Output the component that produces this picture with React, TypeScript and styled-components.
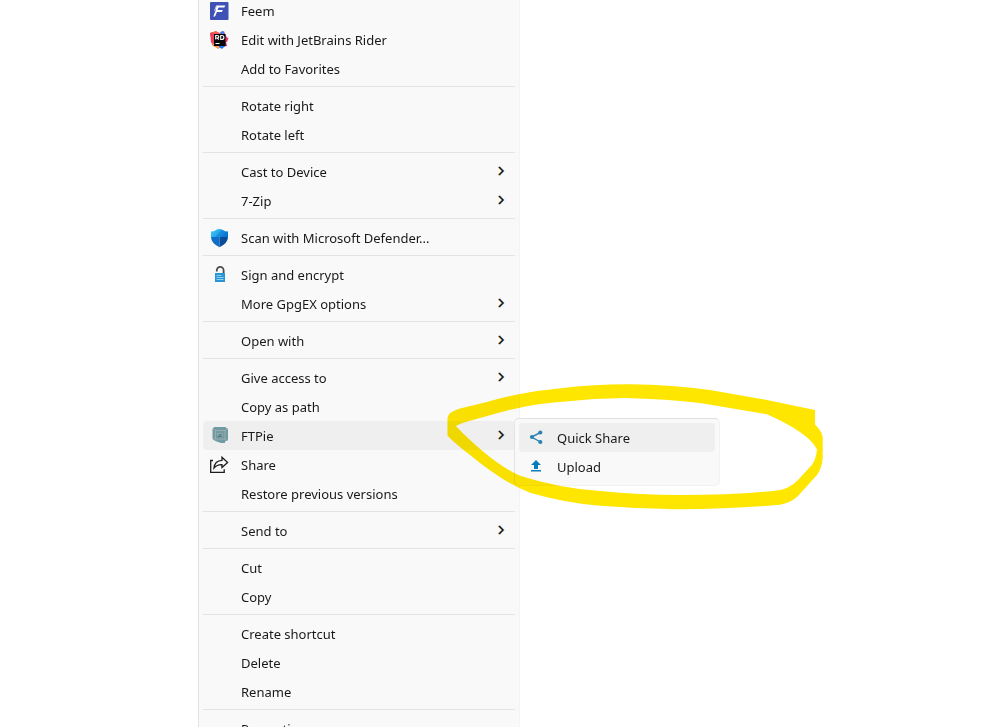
import React from "react";
import styled, { createGlobalStyle } from "styled-components";

const GlobalStyle = createGlobalStyle`
  *, *::before, *::after { box-sizing: border-box; }
  body {
    margin: 0;
    background: #fff;
    color: #191919;
    font-family: "Segoe UI", "Noto Sans", "Open Sans", sans-serif;
    font-size: 13px;
    line-height: 20px;
  }
`;

const Desktop = styled.main`
  height: 100vh;
  overflow: hidden;
  padding-left: 198px;
`;

const Menu = styled.nav`
  width: 322px;
  margin-top: -8px;
  padding: 3px 4px 4px;
  background: #f9f9f9;
  border: 1px solid #f4f4f4;
  border-left-color: #e4e4e4;
`;

const Group = styled.ul`
  list-style: none;
  margin: 0;
  padding: 0;

  & + & {
    margin-top: 3px;
    padding-top: 4px;
    border-top: 1px solid #e4e4e4;
  }
`;

const Entry = styled.li`
  position: relative;
`;

const Item = styled.button<{ $active?: boolean }>`
  display: grid;
  grid-template-columns: 34px 1fr 20px;
  align-items: center;
  width: 100%;
  height: 29px;
  margin: 0;
  padding: 0 4px;
  border: 0;
  border-radius: 4px;
  background: ${(p) => (p.$active ? "#efefef" : "transparent")};
  color: inherit;
  font: inherit;
  text-align: left;
  white-space: nowrap;
`;

const IconSlot = styled.span`
  display: flex;
  align-items: center;
  padding-left: 2px;

  svg {
    display: block;
  }
`;

const Arrow = styled.svg`
  display: block;
  justify-self: center;
`;

const Submenu = styled.ul`
  position: absolute;
  z-index: 1;
  left: calc(100% - 1px);
  top: -3px;
  width: 206px;
  margin: 0;
  padding: 4px;
  list-style: none;
  background: #f9f9f9;
  border: 1px solid #f2f2f2;
  border-top-color: #e0e0e0;
  border-left-color: #e4e4e4;
  border-radius: 5px;
`;

const Highlighter = styled.svg`
  position: absolute;
  z-index: 2;
  left: 244px;
  top: -37px;
  pointer-events: none;
  mix-blend-mode: multiply;
`;

const FeemIcon = () => (
  <svg width="20" height="20" viewBox="0 0 20 20" aria-hidden="true">
    <rect x="1" y="1" width="18.500" height="18" rx="1" fill="#3f51b5" />
    <path d="M7.500 4.500h8.800l-1 2H9.500L8.600 9h5.200l-1 2H8l-2 4.500H4.300l2.200-5.700z" fill="#fff" />
    <path d="M7.500 4.500L5.500 9.800" stroke="#c9cef0" strokeWidth="1" />
  </svg>
);

const RiderIcon = () => (
  <svg width="20" height="20" viewBox="0 0 20 20" aria-hidden="true">
    <path d="M1 3l6-2 4 3-2 14-5-2z" fill="#f4753c" />
    <path d="M1 3l3-1 2 6-2 8-2-4z" fill="#e9415f" />
    <path d="M6 1l5 2 4-2 2 5-4 2-8-3z" fill="#fb5b5b" />
    <path d="M13 2l4 4 2 3-2 3 1 4-5 1z" fill="#c92a86" />
    <path d="M11 2l3-1 3 5h-4z" fill="#3a7cf2" />
    <path d="M3 13l5 2 5 2-4 2-4-3z" fill="#ff9a4a" />
    <path d="M10 15l7 0-4 4-3-2z" fill="#176ff2" />
    <path d="M16 7l3.500 1-1.500 4h-2z" fill="#f0356a" />
    <rect x="5" y="4" width="11.500" height="12" fill="#050505" />
    <path d="M6.700 9.500v-4h1.400q1.700 0 1.700 1.300T8.100 8H6.700M8.200 8l1.600 1.500M11.700 5.500v4h1q2.200 0 2.200-2t-2.200-2zM6.500 13.500h4" fill="none" stroke="#fff" strokeWidth="1.100" />
  </svg>
);

const DefenderIcon = () => (
  <svg width="20" height="20" viewBox="0 0 20 20" aria-hidden="true">
    <defs>
      <linearGradient id="shieldTop" x1="0" y1="0" x2="1" y2="0.400">
        <stop offset="0" stopColor="#3fc8f5" />
        <stop offset="0.500" stopColor="#27aeea" />
        <stop offset="0.600" stopColor="#1a92e0" />
        <stop offset="1" stopColor="#0b76d0" />
      </linearGradient>
    </defs>
    <path d="M2 9V3.500q3 0 5-1.500 3-2 7 0 2 1.500 5 1.500V9z" fill="url(#shieldTop)" />
    <path d="M2 9h8.500v10.300Q2 15 2 9z" fill="#0c70c8" />
    <path d="M10.500 9H19q0 6-8.500 10.300z" fill="#0a4c98" />
  </svg>
);

const LockIcon = () => (
  <svg width="20" height="20" viewBox="0 0 20 20" aria-hidden="true">
    <path d="M7.800 6.500V5.200a3.400 3.400 0 0 1 6.800 0V9" fill="none" stroke="#4b4b4b" strokeWidth="1.800" />
    <rect x="6" y="8" width="10" height="9" fill="#2995d4" />
    <path d="M7.500 10.500h5M7.500 12.500h7M7.500 14.500h7" stroke="#8ed0f2" strokeWidth="1" />
  </svg>
);

const FtpieIcon = () => (
  <svg width="20" height="20" viewBox="0 0 20 20" aria-hidden="true">
    <path d="M5 1h11.500L19 3.500V14l-3 1.500v1.500h-4L9 16l-3.500-1.500L3.500 13V3z" fill="#6f9ca2" />
    <path d="M4 2.500l2.500 2h9.500v8.500H6.500V4.500M16 4.500l2.500-2M6.500 13l-2-1M16 13l2.500 1.500" fill="none" stroke="#a0a9ab" strokeWidth="1" />
    <path d="M9 7.500h4.500v3M8.500 7v3.500H13" fill="none" stroke="#9ba4a6" strokeWidth="1" />
    <path d="M8.500 10.500h4M10 9h3" fill="none" stroke="#4f7e89" strokeWidth="1" />
  </svg>
);

const ShareIcon = () => (
  <svg width="20" height="20" viewBox="0 0 20 20" aria-hidden="true" fill="none" stroke="#1c1c1c" strokeWidth="1.300">
    <path d="M4 5.500H1.700v11.800h13.500v-3" />
    <path d="M5 13Q5.500 5.800 13 5.300V2.300l5.600 5.200-5.600 5V9.700Q8 9.500 5 13z" strokeLinejoin="miter" />
  </svg>
);

const QuickShareIcon = () => (
  <svg width="20" height="20" viewBox="0 0 20 20" aria-hidden="true" fill="#2a83b2">
    <path d="M15.500 4.500L6.500 9l9 5" fill="none" stroke="#2a83b2" strokeWidth="1.400" />
    <circle cx="15.300" cy="4.500" r="2.100" />
    <circle cx="7" cy="9" r="2.100" />
    <circle cx="15.300" cy="14" r="2.100" />
  </svg>
);

const UploadIcon = () => (
  <svg width="20" height="20" viewBox="0 0 20 20" aria-hidden="true" fill="#087dbb">
    <path d="M11 3l5 5h-3v4H9V8H6zM6 13h10v1.500H6z" />
  </svg>
);

type EntryData = {
  label: string;
  icon?: React.ReactNode;
  expands?: boolean;
  active?: boolean;
  children?: EntryData[];
};

const groups: EntryData[][] = [
  [
    { label: "Feem", icon: <FeemIcon /> },
    { label: "Edit with JetBrains Rider", icon: <RiderIcon /> },
    { label: "Add to Favorites" },
  ],
  [{ label: "Rotate right" }, { label: "Rotate left" }],
  [
    { label: "Cast to Device", expands: true },
    { label: "7-Zip", expands: true },
  ],
  [{ label: "Scan with Microsoft Defender...", icon: <DefenderIcon /> }],
  [
    { label: "Sign and encrypt", icon: <LockIcon /> },
    { label: "More GpgEX options", expands: true },
  ],
  [{ label: "Open with", expands: true }],
  [
    { label: "Give access to", expands: true },
    { label: "Copy as path" },
    {
      label: "FTPie",
      icon: <FtpieIcon />,
      expands: true,
      active: true,
      children: [
        { label: "Quick Share", icon: <QuickShareIcon />, active: true },
        { label: "Upload", icon: <UploadIcon /> },
      ],
    },
    { label: "Share", icon: <ShareIcon /> },
    { label: "Restore previous versions" },
  ],
  [{ label: "Send to", expands: true }],
  [{ label: "Cut" }, { label: "Copy" }],
  [{ label: "Create shortcut" }, { label: "Delete" }, { label: "Rename" }],
  [{ label: "Properties" }],
];

const MarkerStroke = () => (
  <Highlighter width="376" height="126" viewBox="447 384 376 126" aria-hidden="true">
    <path
      fill="#ffe600"
      fillRule="evenodd"
      d="M447.500 418Q448 412 460 408.500L487 402Q504 397 520 394Q541 390 563 388Q597 384 630 384.300Q673 385 710 390L767 400L815 410V424.500Q822.700 432 822.700 438V458Q822 468 817 475L797 497Q790 503 780 504.700Q733 509 680 509.300Q640 509 600 505.700Q565 503 530 492.700Q504 483 470 455Q452 441 447.500 435.500Z
      M455.700 426L463 422.700L497 413.300Q529 404 563 401.700Q594 398 625 398Q667 399 700 403L767 414.300Q809 433 817 449.500Q816 462 809 468L798 480Q789 490 773 491Q733 495 680 495Q640 495 600 491Q558 488 520 475.700Q493 464 455.700 426Z"
    />
  </Highlighter>
);

const MenuEntry = ({ entry }: { entry: EntryData }) => (
  <Entry>
    <Item type="button" $active={entry.active} aria-expanded={entry.children ? true : undefined}>
      <IconSlot>{entry.icon}</IconSlot>
      <span>{entry.label}</span>
      {entry.expands && (
        <Arrow width="10" height="13" viewBox="0 0 10 13" aria-hidden="true" fill="none" strokeWidth="1.300">
          <path d="M2.300 2l4 4-4 4" stroke="#f5b457" />
          <path d="M3.700 2l4 4-4 4" stroke="#63b4ee" />
          <path d="M3 2l4 4-4 4" stroke="#151515" />
        </Arrow>
      )}
    </Item>
    {entry.children && (
      <>
        <Submenu>
          {entry.children.map((child) => (
            <MenuEntry key={child.label} entry={child} />
          ))}
        </Submenu>
        <MarkerStroke />
      </>
    )}
  </Entry>
);

export default function App() {
  return (
    <>
      <GlobalStyle />
      <Desktop>
        <Menu aria-label="Context menu">
          {groups.map((group) => (
            <Group key={group[0].label}>
              {group.map((entry) => (
                <MenuEntry key={entry.label} entry={entry} />
              ))}
            </Group>
          ))}
        </Menu>
      </Desktop>
    </>
  );
}
